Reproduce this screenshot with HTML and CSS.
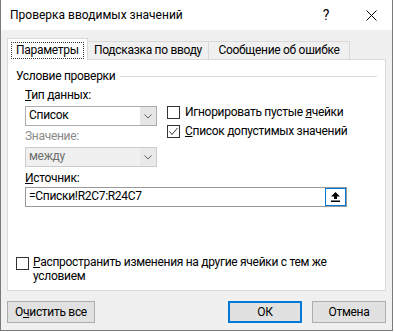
FILE: index.html
```html
<!DOCTYPE html>
<html lang="ru">

<head>
  <meta charset="UTF-8">
  <title>Проверка вводимых значений</title>
  <link rel="stylesheet" href="styles.css">
</head>

<body>
  <div class="dialog">
    <div class="titlebar">
      <span class="title">Проверка вводимых значений</span>
      <span class="help">?</span>
      <span class="close">
        <svg width="11" height="11" viewBox="0 0 11 11">
          <path d="M0.5 0.5 L10.5 10.5 M10.5 0.5 L0.5 10.5" stroke="#000" stroke-width="1" fill="none" />
        </svg>
      </span>
    </div>

    <div class="content">
      <div class="tabs">
        <div class="tab active"><span class="focus">Параметры</span></div>
        <div class="tab tab-hint">Подсказка по вводу</div>
        <div class="tab tab-error">Сообщение об ошибке</div>
      </div>

      <div class="panel">
        <div class="group-title">
          <span>Условие проверки</span>
          <span class="rule"></span>
        </div>

        <div class="fields">
          <div class="top-row">
            <div class="left-col">
              <div class="label"><u>Т</u>ип данных:</div>
              <div class="select">
                <span class="value">Список</span>
                <span class="arrow">
                  <svg width="8" height="5" viewBox="0 0 8 5">
                    <path d="M0.5 0.5 L4 4 L7.5 0.5" stroke="#606060" stroke-width="1" fill="none" />
                  </svg>
                </span>
              </div>
              <div class="label disabled">Значение:</div>
              <div class="select disabled">
                <span class="value">между</span>
                <span class="arrow">
                  <svg width="8" height="5" viewBox="0 0 8 5">
                    <path d="M0.5 0.5 L4 4 L7.5 0.5" stroke="#606060" stroke-width="1" fill="none" />
                  </svg>
                </span>
              </div>
            </div>

            <div class="checks">
              <div class="check">
                <span class="box"></span>
                <span>Игнорировать пустые <u>я</u>чейки</span>
              </div>
              <div class="check">
                <span class="box">
                  <svg width="11" height="11" viewBox="0 0 11 11">
                    <path d="M1.5 5.5 L4 8.5 L9.5 2" stroke="#333" stroke-width="1" fill="none" />
                  </svg>
                </span>
                <span><u>С</u>писок допустимых значений</span>
              </div>
            </div>
          </div>

          <div class="label source-label"><u>И</u>сточник:</div>
          <div class="source">
            <span class="value">=Списки!R2C7:R24C7</span>
            <span class="pick">
              <svg width="9" height="10" viewBox="0 0 9 10">
                <path d="M4.5 0 L9 4.5 L6 4.5 L6 7 L3 7 L3 4.5 L0 4.5 Z" fill="#000" />
                <rect x="0" y="8.5" width="9" height="1.5" fill="#000" />
              </svg>
            </span>
          </div>
        </div>

        <div class="check spread">
          <span class="box"></span>
          <span class="spread-text">Распространить изменения на другие ячейки с тем же условием</span>
        </div>
      </div>

      <div class="buttons">
        <button class="btn">О<u>ч</u>истить все</button>
        <span class="spacer"></span>
        <button class="btn default">ОК</button>
        <button class="btn cancel">Отмена</button>
      </div>
    </div>
  </div>
</body>

</html>
```

FILE: styles.css
```css
* {
  box-sizing: border-box;
}

body {
  margin: 0;
  font-family: Roboto, "Noto Sans", sans-serif;
  font-size: 12px;
  letter-spacing: -0.3px;
  color: #000;
  background: #fff;
}

.dialog {
  width: 393px;
  height: 331px;
  border: 1px solid #7a7a7a;
  border-top: none;
  background: #f0f0f0;
  display: flex;
  flex-direction: column;
}

.titlebar {
  height: 30px;
  background: #fff;
  display: flex;
  align-items: center;
  padding-left: 9px;
}

.title {
  letter-spacing: 0;
}

.help {
  margin-left: auto;
  width: 10px;
  text-align: center;
  font-size: 14px;
}

.close {
  display: flex;
  margin-left: 35px;
  margin-right: 15px;
}

.content {
  padding: 8px 6px 0;
}

/* tabs */
.tabs {
  display: flex;
  align-items: flex-end;
  margin-bottom: -1px;
}

.tab {
  height: 18px;
  margin-bottom: 1px;
  margin-left: -1px;
  border: 1px solid #d9d9d9;
  border-bottom: none;
  background: #f0f0f0;
  line-height: 17px;
  text-align: center;
  white-space: nowrap;
}

.tab-hint {
  width: 122px;
}

.tab-error {
  width: 142px;
}

.tab.active {
  width: 81px;
  height: 22px;
  margin: 0;
  padding: 3px 0 0 3px;
  background: #fff;
  text-align: left;
  position: relative;
  z-index: 1;
}

.focus {
  display: inline-block;
  border: 1px dotted #333;
  padding: 0 4px;
  line-height: 15px;
}

.panel {
  height: 232px;
  border: 1px solid #d9d9d9;
  background: #fff;
  padding-top: 8px;
}

.group-title {
  display: flex;
  align-items: center;
  line-height: 16px;
  padding-left: 8px;
}

.rule {
  flex: 1;
  height: 1px;
  background: #dcdcdc;
  margin: 0 8px 0 5px;
}

.fields {
  padding-left: 17px;
  margin-top: 3px;
}

.top-row {
  display: flex;
  gap: 10px;
}

.left-col {
  width: 132px;
}

.label {
  line-height: 17px;
  height: 16px;
}

.label.disabled {
  color: #8a8a8a;
  margin-top: 2px;
}

.select {
  display: flex;
  height: 20px;
  margin-top: 3px;
  border: 1px solid #adadad;
  background: #fff;
}

.select .value {
  flex: 1;
  padding-left: 3px;
  line-height: 17px;
}

.select .arrow {
  width: 16px;
  background: #e6e6e6;
  display: flex;
  align-items: center;
  justify-content: center;
}

.select.disabled {
  border-color: #cccccc;
  background: #f0f0f0;
  color: #6d6d6d;
}

.select.disabled .arrow {
  background: #e9e9e9;
}

.checks {
  padding-top: 17px;
  display: flex;
  flex-direction: column;
  gap: 3px;
}

.check {
  display: flex;
  align-items: flex-start;
  gap: 5px;
  line-height: 16px;
  white-space: nowrap;
}

.box {
  width: 13px;
  height: 13px;
  margin-top: 2px;
  border: 1px solid #333;
  background: #fff;
  display: flex;
  flex-shrink: 0;
}

.source-label {
  margin-top: 3px;
}

.source {
  display: flex;
  width: 322px;
  height: 20px;
  margin-top: 1px;
  border: 1px solid #999;
}

.source .value {
  flex: 1;
  padding-left: 3px;
  line-height: 17px;
}

.pick {
  width: 21px;
  height: 18px;
  border: 1px solid #0078d7;
  background: #fff;
  display: flex;
  align-items: center;
  justify-content: center;
}

.spread {
  margin: 48px 0 0 8px;
  gap: 4px;
  line-height: 14px;
}

.spread .box {
  margin-top: 2px;
}

.spread-text {
  display: block;
  white-space: normal;
  width: 310px;
}

.spread-text::first-letter {
  text-decoration: underline;
}

/* buttons */
.buttons {
  display: flex;
  margin-top: 10px;
}

.spacer {
  flex: 1;
}

.btn {
  height: 22px;
  width: 74px;
  padding: 0;
  border: 1px solid #adadad;
  background: #e1e1e1;
  font-family: inherit;
  font-size: 12px;
  letter-spacing: inherit;
  color: #000;
}

.btn:first-child {
  width: 88px;
}

.btn.default {
  border: 2px solid #0078d7;
}

.btn.cancel {
  margin-left: 10px;
}
```
